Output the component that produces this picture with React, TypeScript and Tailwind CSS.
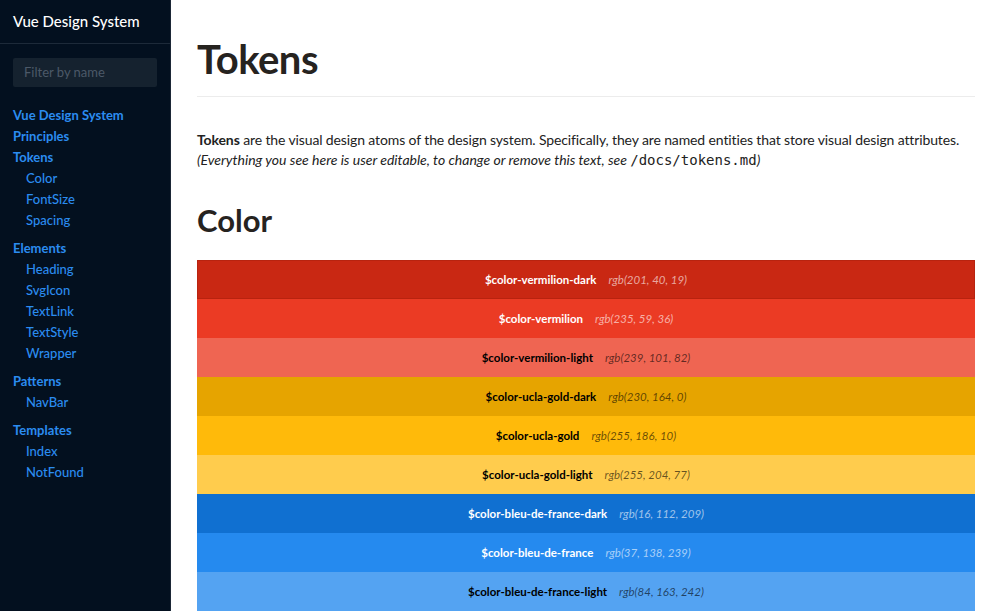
import React from "react";

const font = { fontFamily: "Lato, 'Noto Sans', sans-serif" };

const nav: { title: string; items: string[] }[] = [
  { title: "Vue Design System", items: [] },
  { title: "Principles", items: [] },
  { title: "Tokens", items: ["Color", "FontSize", "Spacing"] },
  { title: "Elements", items: ["Heading", "SvgIcon", "TextLink", "TextStyle", "Wrapper"] },
  { title: "Patterns", items: ["NavBar"] },
  { title: "Templates", items: ["Index", "NotFound"] },
];

const colors = [
  { name: "$color-vermilion-dark", rgb: "rgb(201, 40, 19)", bg: "bg-[#c92813]", dark: true },
  { name: "$color-vermilion", rgb: "rgb(235, 59, 36)", bg: "bg-[#eb3b24]", dark: true },
  { name: "$color-vermilion-light", rgb: "rgb(239, 101, 82)", bg: "bg-[#ef6552]", dark: false },
  { name: "$color-ucla-gold-dark", rgb: "rgb(230, 164, 0)", bg: "bg-[#e6a400]", dark: false },
  { name: "$color-ucla-gold", rgb: "rgb(255, 186, 10)", bg: "bg-[#ffba0a]", dark: false },
  { name: "$color-ucla-gold-light", rgb: "rgb(255, 204, 77)", bg: "bg-[#ffcc4d]", dark: false },
  { name: "$color-bleu-de-france-dark", rgb: "rgb(16, 112, 209)", bg: "bg-[#1070d1]", dark: true },
  { name: "$color-bleu-de-france", rgb: "rgb(37, 138, 239)", bg: "bg-[#258aef]", dark: true },
  { name: "$color-bleu-de-france-light", rgb: "rgb(84, 163, 242)", bg: "bg-[#54a3f2]", dark: false },
];

export default function App() {
  return (
    <div style={font} className="flex h-[611px] w-[1000px] overflow-hidden bg-white">
      <aside className="flex w-[171px] shrink-0 flex-col bg-[#03101f] border-r border-[#1b2736]">
        <div className="flex h-[44px] items-center border-b border-[#1d2a39] px-[13px] text-[15px] font-medium text-white">
          Vue Design System
        </div>
        <div className="px-[13px] pt-[14px]">
          <div className="flex h-[29px] items-center rounded-[2px] bg-[#15222f] px-[11px] text-[13px] text-[#4c5968]">
            Filter by name
          </div>
        </div>
        <nav className="flex flex-col gap-[7px] px-[13px] pt-[18px] text-[13px] text-[#2b8cf0]">
          {nav.map((g, i) => (
            <div key={g.title} className={i < 3 && i > 0 ? "-mt-[7px]" : ""}>
              <div className="flex h-[21px] items-center font-bold">{g.title}</div>
              {g.items.map((it) => (
                <div key={it} className="flex h-[21px] items-center pl-[13px] font-medium">
                  {it}
                </div>
              ))}
            </div>
          ))}
        </nav>
      </aside>
      <main className="flex-1 pl-[26px] pr-[25px] text-[#1d1d1d]">
        <h1 className="flex h-[97px] items-center border-b border-[#ececec] pt-[22px] text-[40px] font-bold tracking-[-0.5px] text-[#26231f]">
          Tokens
        </h1>
        <div className="pt-[33px] text-[14px] leading-[20px] text-[#222]">
          <p className="whitespace-nowrap tracking-[-0.12px]">
            <b>Tokens</b> are the visual design atoms of the design system. Specifically, they are named entities that store visual design attributes.
          </p>
          <p className="italic">
            (Everything you see here is user editable, to change or remove this text, see{" "}
            <code className="not-italic" style={{ fontFamily: "'DejaVu Sans Mono', monospace" }}>/docs/tokens.md</code>)
          </p>
        </div>
        <h2 className="flex h-[90px] items-center pt-[10px] text-[31px] font-bold text-[#26231f]">Color</h2>
        <div className="flex flex-col">
          {colors.map((c, i) => (
            <div
              key={c.name}
              className={`flex h-[39px] items-center justify-center gap-[12px] text-[11.5px] ${c.bg} ${i === 0 ? "border border-[#b8230f]" : ""} ${c.dark ? "text-white" : "text-black"}`}
            >
              <span className="font-bold">{c.name}</span>
              <span className={`italic ${c.dark ? "text-white/60" : "text-black/60"}`}>{c.rgb}</span>
            </div>
          ))}
        </div>
      </main>
    </div>
  );
}
